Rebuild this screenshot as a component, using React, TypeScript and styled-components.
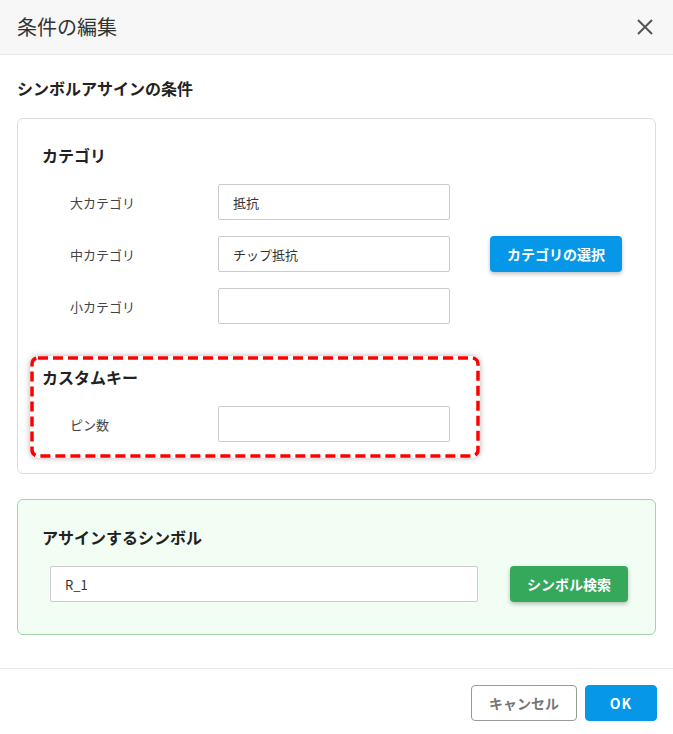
import * as React from "react";
import styled, { createGlobalStyle } from "styled-components";

const GlobalStyle = createGlobalStyle`
  html, body {
    margin: 0;
    padding: 0;
    background: #ffffff;
  }

  body {
    font-family: "Noto Sans CJK JP", "Noto Sans", sans-serif;
    color: #333333;
  }

  * {
    box-sizing: border-box;
  }
`;

const Dialog = styled.section`
  width: 673px;
  height: 734px;
  background: #ffffff;
  display: flex;
  flex-direction: column;
`;

const Header = styled.header`
  height: 55px;
  flex-shrink: 0;
  background: #f7f7f7;
  border-bottom: 1px solid #e6e6e6;
  display: flex;
  align-items: center;
  justify-content: space-between;
  padding: 0 20px 0 17px;
`;

const Title = styled.h1`
  margin: 0;
  font-size: 20px;
  font-weight: 400;
  color: #333333;
  line-height: 28px;
`;

const CloseButton = styled.button`
  border: none;
  background: none;
  padding: 0;
  width: 16px;
  height: 16px;
  display: flex;
  cursor: pointer;
`;

const Body = styled.div`
  padding: 21px 17px 32px;
`;

const SectionTitle = styled.h2`
  margin: 0 0 18px;
  font-size: 16px;
  font-weight: 700;
  line-height: 24px;
  color: #222222;
`;

const Card = styled.div<{ $tone?: "plain" | "green" }>`
  border: 1px solid ${(p) => (p.$tone === "green" ? "#a3d3ad" : "#dddddd")};
  background: ${(p) => (p.$tone === "green" ? "#f2fdf4" : "#ffffff")};
  border-radius: 6px;
  padding: ${(p) => (p.$tone === "green" ? "25px 24px 32px" : "24px 24px 15px")};
`;

const GroupTitle = styled.h3`
  margin: 0 0 17px;
  font-size: 16px;
  font-weight: 700;
  line-height: 24px;
  color: #222222;
`;

const Rows = styled.div`
  display: flex;
  flex-direction: column;
  gap: 16px;
`;

const Row = styled.div<{ $indent?: number }>`
  display: flex;
  align-items: center;
  padding-left: ${(p) => p.$indent ?? 28}px;
`;

const Label = styled.label`
  width: 148px;
  font-size: 13px;
  color: #444444;
`;

const TextInput = styled.input<{ $width: number }>`
  width: ${(p) => p.$width}px;
  height: 36px;
  border: 1px solid #cccccc;
  border-radius: 2px;
  background: #ffffff;
  padding: 0 14px;
  font-family: inherit;
  font-size: 13px;
  color: #333333;
  outline: none;
`;

const ActionButton = styled.button<{ $color: "blue" | "green"; $gap: number }>`
  margin-left: ${(p) => p.$gap}px;
  height: 36px;
  padding: 0 17px;
  border: none;
  border-radius: 4px;
  background: ${(p) => (p.$color === "blue" ? "#0797e8" : "#36a85c")};
  color: #ffffff;
  font-family: inherit;
  font-size: 14px;
  font-weight: 700;
  box-shadow: 0 2px 4px rgba(0, 0, 0, 0.25);
  cursor: pointer;
`;

/* annotation frame: the dashed outline is drawn by an svg laid over the box */
const HighlightBox = styled.div`
  position: relative;
  margin: 32px 0 0 -12px;
  width: 450px;
  height: 102px;
  border-radius: 8px;
  padding: 9px 12px 0;
  box-shadow: 0 0 6px rgba(0, 0, 0, 0.28);
`;

const DashedFrame = styled.svg`
  position: absolute;
  inset: 0;
  pointer-events: none;
`;

const Spacer = styled.div`
  height: 25px;
`;

const Footer = styled.footer`
  margin-top: auto;
  border-top: 1px solid #e8e8e8;
  padding: 16px 16px 13px;
  display: flex;
  justify-content: flex-end;
  gap: 8px;
`;

const FooterButton = styled.button<{ $primary?: boolean }>`
  height: 36px;
  width: ${(p) => (p.$primary ? 72 : 106)}px;
  border-radius: 4px;
  border: 1px solid ${(p) => (p.$primary ? "#0797e8" : "#999999")};
  background: ${(p) => (p.$primary ? "#0797e8" : "#ffffff")};
  color: ${(p) => (p.$primary ? "#ffffff" : "#777777")};
  font-family: inherit;
  font-size: 14px;
  font-weight: 700;
  letter-spacing: ${(p) => (p.$primary ? "1px" : "0")};
  cursor: pointer;
`;

const categories = [
  { label: "大カテゴリ", value: "抵抗" },
  { label: "中カテゴリ", value: "チップ抵抗", withButton: true },
  { label: "小カテゴリ", value: "" },
];

const CloseIcon = () => (
  <svg width="16" height="16" viewBox="0 0 16 16">
    <path
      d="M1 1 L15 15 M15 1 L1 15"
      stroke="#555555"
      strokeWidth="2"
      fill="none"
    />
  </svg>
);

export default function App() {
  return (
    <>
      <GlobalStyle />
      <Dialog>
        <Header>
          <Title>条件の編集</Title>
          <CloseButton aria-label="閉じる">
            <CloseIcon />
          </CloseButton>
        </Header>

        <Body>
          <SectionTitle>シンボルアサインの条件</SectionTitle>

          <Card>
            <GroupTitle>カテゴリ</GroupTitle>
            <Rows>
              {categories.map((c) => (
                <Row key={c.label}>
                  <Label>{c.label}</Label>
                  <TextInput $width={232} defaultValue={c.value} />
                  {c.withButton && (
                    <ActionButton $color="blue" $gap={40}>
                      カテゴリの選択
                    </ActionButton>
                  )}
                </Row>
              ))}
            </Rows>

            <HighlightBox>
              <DashedFrame width="450" height="102" viewBox="0 0 450 102">
                <rect
                  x="2"
                  y="2"
                  width="446"
                  height="98"
                  rx="6"
                  fill="none"
                  stroke="#ff0000"
                  strokeWidth="3.5"
                  strokeDasharray="10 5"
                />
              </DashedFrame>
              <GroupTitle>カスタムキー</GroupTitle>
              <Row>
                <Label>ピン数</Label>
                <TextInput $width={232} defaultValue="" />
              </Row>
            </HighlightBox>
          </Card>

          <Spacer />

          <Card $tone="green">
            <GroupTitle>アサインするシンボル</GroupTitle>
            <Row $indent={8}>
              <TextInput $width={428} defaultValue="R_1" />
              <ActionButton $color="green" $gap={32}>
                シンボル検索
              </ActionButton>
            </Row>
          </Card>
        </Body>

        <Footer>
          <FooterButton>キャンセル</FooterButton>
          <FooterButton $primary>OK</FooterButton>
        </Footer>
      </Dialog>
    </>
  );
}
